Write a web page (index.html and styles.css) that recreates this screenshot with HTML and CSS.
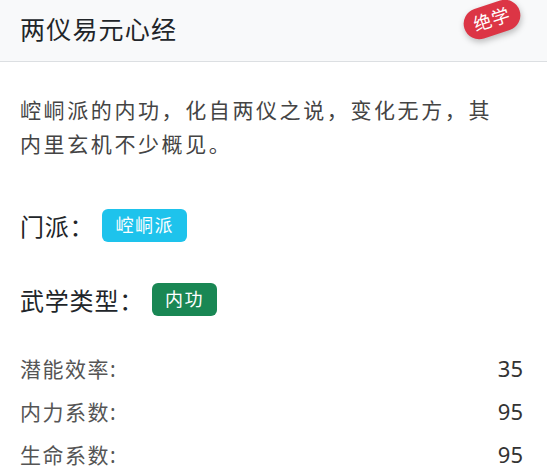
FILE: index.html
```html
<!DOCTYPE html>
<html lang="zh-CN">

<head>
    <meta charset="UTF-8">
    <meta name="viewport" content="width=device-width, initial-scale=1.0">
    <title>两仪易元心经</title>
    <link rel="stylesheet" href="styles.css">
</head>

<body>
    <div class="card">
        <div class="cardHead">
            <h1 class="title">两仪易元心经</h1>
            <span class="rank">绝学</span>
        </div>
        <div class="cardBody">
            <p class="desc">崆峒派的内功，化自两仪之说，变化无方，其内里玄机不少概见。</p>
            <div class="field">
                <span class="label">门派：</span>
                <span class="badge info">崆峒派</span>
            </div>
            <div class="field">
                <span class="label">武学类型：</span>
                <span class="badge success">内功</span>
            </div>
            <ul class="stats">
                <li><span>潜能效率:</span><span class="num">35</span></li>
                <li><span>内力系数:</span><span class="num">95</span></li>
                <li><span>生命系数:</span><span class="num">95</span></li>
            </ul>
        </div>
    </div>
</body>

</html>
```

FILE: styles.css
```css
body {
    margin: 0;
    background-color: white;
    font-family: "Noto Sans", "Noto Sans CJK SC", sans-serif;
    color: #212529;
}

.card {
    width: 100%;
}

.cardHead {
    position: relative;
    display: flex;
    align-items: center;
    height: 62px;
    padding: 0 20px 6px;
    box-sizing: border-box;
    background-color: #f8f9fa;
    border-bottom: 1px solid #dcdfe2;
}

.title {
    margin: 0;
    font-size: 25px;
    font-weight: normal;
    letter-spacing: 1.2px;
    color: #212529;
}

.rank {
    position: absolute;
    top: 4px;
    right: 26px;
    width: 58px;
    height: 31px;
    line-height: 31px;
    text-align: center;
    font-size: 18px;
    letter-spacing: 1px;
    color: white;
    background-color: #dc3545;
    border-radius: 16px;
    transform: rotate(-18deg);
    box-shadow: 0 3px 6px rgba(0, 0, 0, 0.25);
}

.cardBody {
    padding: 31px 24px 0 20px;
}

.desc {
    margin: 0;
    max-width: 485px;
    font-size: 21px;
    line-height: 34px;
    letter-spacing: 2.6px;
    color: #444;
}

.field {
    display: flex;
    align-items: center;
    height: 33px;
    margin-top: 48px;
}

.field + .field {
    margin-top: 41px;
}

.label {
    font-size: 24px;
    letter-spacing: 0.8px;
    margin-right: 8px;
}

.badge {
    height: 33px;
    line-height: 33px;
    padding: 0 13px;
    font-size: 18px;
    letter-spacing: 1.5px;
    color: white;
    border-radius: 6px;
}

.info {
    background-color: #1ec3ec;
}

.success {
    background-color: #198754;
}

.stats {
    list-style: none;
    margin: 30px 0 0;
    padding: 0;
}

.stats li {
    display: flex;
    justify-content: space-between;
    align-items: center;
    height: 43px;
    font-size: 21px;
    letter-spacing: 1.5px;
    color: #555;
}

.num {
    font-size: 22px;
    letter-spacing: 0;
    color: #333;
}
```
